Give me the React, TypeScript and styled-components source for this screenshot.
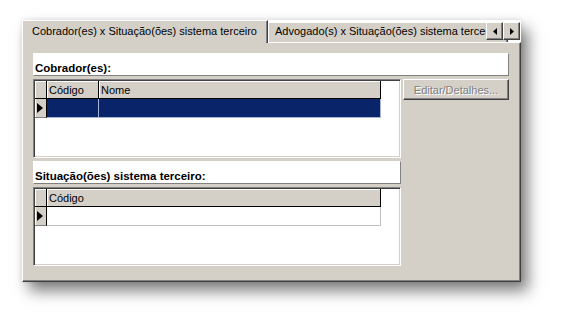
import React from 'react';
import styled, { createGlobalStyle } from 'styled-components';

const Global = createGlobalStyle`
  html, body {
    margin: 0;
    background: #ffffff;
    font-family: "Liberation Sans", Arial, sans-serif;
    font-size: 11px;
  }
  * { box-sizing: border-box; }
`;

const Page = styled.div`
  padding: 20px 0 0 22px;
  width: 563px;
  height: 324px;
`;

const Window = styled.div`
  width: 499px;
  box-shadow: 7px 9px 14px rgba(0, 0, 0, 0.5), 0 0 5px rgba(0, 0, 0, 0.12);
`;

const TabStrip = styled.div`
  position: relative;
  height: 22px;
  display: flex;
  align-items: flex-end;
  background: #ffffff;
`;

const Tab = styled.div<{ $active?: boolean }>`
  flex-shrink: 0;
  position: relative;
  z-index: ${(p) => (p.$active ? 2 : 1)};
  height: ${(p) => (p.$active ? '23px' : '20px')};
  margin-bottom: ${(p) => (p.$active ? '-1px' : '0')};
  width: ${(p) => (p.$active ? '246px' : '240px')};
  padding: ${(p) => (p.$active ? '4px 0 0 9px' : '2px 0 0 6px')};
  background: #d4d0c8;
  color: #000;
  white-space: nowrap;
  overflow: hidden;
  border-top: 1px solid #ffffff;
  border-left: 1px solid #ffffff;
  border-right: 1px solid #404040;
  box-shadow: inset -1px 0 #808080;
`;

const ScrollButtons = styled.div`
  position: absolute;
  right: 1px;
  top: 2px;
  z-index: 3;
  display: flex;
`;

const ArrowButton = styled.div`
  width: 17px;
  height: 18px;
  background: #d4d0c8;
  border: 1px solid;
  border-color: #ffffff #404040 #404040 #ffffff;
  box-shadow: inset -1px -1px #808080;
  display: flex;
  align-items: center;
  justify-content: center;
`;

const Body = styled.div`
  position: relative;
  z-index: 1;
  height: 240px;
  background: #d4d0c8;
  border: 1px solid;
  border-color: #ffffff #404040 #404040 #ffffff;
  box-shadow: inset -1px -1px #808080;
  padding: 10px 11px 0 10px;
  display: flex;
  flex-direction: column;
  gap: 3px;
`;

const Caption = styled.div`
  height: 23px;
  background: #ffffff;
  border: 1px solid;
  border-color: #ffffff #808080 #808080 #ffffff;
  padding: 8px 0 0 1px;
  font-weight: bold;
  font-size: 11.5px;
  color: #000;
  white-space: nowrap;
`;

const Content = styled.div`
  display: flex;
  gap: 2px;
  align-items: flex-start;
`;

const LeftColumn = styled.div`
  width: 368px;
  display: flex;
  flex-direction: column;
  gap: 3px;
`;

const GridBox = styled.div`
  height: 79px;
  background: #ffffff;
  border: 1px solid;
  border-color: #808080 #ffffff #ffffff #808080;
  box-shadow: inset 1px 1px #404040, inset -1px -1px #d4d0c8;
  padding: 1px;
`;

const GridTable = styled.div<{ $cols: string }>`
  display: grid;
  grid-template-columns: ${(p) => p.$cols};
  grid-template-rows: 18px 19px;
  width: max-content;
`;

const HeaderCell = styled.div`
  background: #d4d0c8;
  border-right: 1px solid #000;
  border-bottom: 1px solid #000;
  box-shadow: inset 1px 1px #ffffff;
  padding: 3px 0 0 2px;
  color: #000;
  white-space: nowrap;
`;

const Indicator = styled.div`
  background: #d4d0c8;
  border-right: 1px solid #000;
  border-bottom: 1px solid #808080;
  box-shadow: inset 1px 0 #ffffff;
  display: flex;
  align-items: center;
  padding-left: 2px;
`;

const DataCell = styled.div<{ $selected?: boolean }>`
  background: ${(p) => (p.$selected ? '#0a246a' : '#ffffff')};
  border-right: 1px solid ${(p) => (p.$selected ? '#a6b4d8' : '#c0c0c0')};
  border-bottom: 1px solid ${(p) => (p.$selected ? '#a6b4d8' : '#c0c0c0')};
`;

const Button = styled.button`
  width: 106px;
  height: 21px;
  background: #d4d0c8;
  border: 1px solid;
  border-color: #ffffff #404040 #404040 #ffffff;
  box-shadow: inset -1px -1px #808080;
  font-family: "Liberation Sans", Arial, sans-serif;
  font-size: 11px;
  color: #808080;
  text-shadow: 1px 1px #ffffff;
  padding: 0;
  cursor: default;
`;

const Triangle = ({ dir }: { dir: 'left' | 'right' }) => (
  <svg width="4" height="7" viewBox="0 0 4 7">
    {dir === 'right' ? (
      <polygon points="0,0 4,3.5 0,7" fill="#000" />
    ) : (
      <polygon points="4,0 0,3.5 4,7" fill="#000" />
    )}
  </svg>
);

const RowPointer = () => (
  <svg width="6" height="10" viewBox="0 0 6 10">
    <polygon points="0,0 6,5 0,10" fill="#000" />
  </svg>
);

export default function App() {
  return (
    <>
      <Global />
      <Page>
        <Window>
          <TabStrip>
            <Tab $active>Cobrador(es) x Situação(ões) sistema terceiro</Tab>
            <Tab>Advogado(s) x Situação(ões) sistema terceiro</Tab>
            <ScrollButtons>
              <ArrowButton>
                <Triangle dir="left" />
              </ArrowButton>
              <ArrowButton>
                <Triangle dir="right" />
              </ArrowButton>
            </ScrollButtons>
          </TabStrip>
          <Body>
            <Caption>Cobrador(es):</Caption>
            <Content>
              <LeftColumn>
                <GridBox>
                  <GridTable $cols="12px 52px 282px">
                    <HeaderCell />
                    <HeaderCell>Código</HeaderCell>
                    <HeaderCell>Nome</HeaderCell>
                    <Indicator>
                      <RowPointer />
                    </Indicator>
                    <DataCell $selected />
                    <DataCell $selected />
                  </GridTable>
                </GridBox>
                <Caption>Situação(ões) sistema terceiro:</Caption>
                <GridBox>
                  <GridTable $cols="12px 334px">
                    <HeaderCell />
                    <HeaderCell>Código</HeaderCell>
                    <Indicator>
                      <RowPointer />
                    </Indicator>
                    <DataCell />
                  </GridTable>
                </GridBox>
              </LeftColumn>
              <Button disabled>Editar/Detalhes...</Button>
            </Content>
          </Body>
        </Window>
      </Page>
    </>
  );
}
